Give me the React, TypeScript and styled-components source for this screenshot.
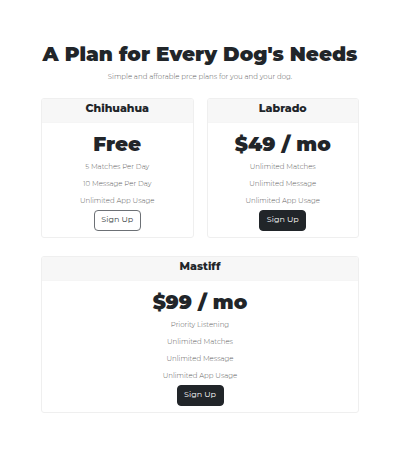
import React from "react";
import styled, { createGlobalStyle } from "styled-components";

const GlobalStyle = createGlobalStyle`
  *, *::before, *::after { box-sizing: border-box; }
  body {
    margin: 0;
    background: #fff;
    color: #212529;
    font-family: Montserrat, Inter, sans-serif;
  }
`;

const Pricing = styled.section`
  padding: 40px 41px;
  text-align: center;
`;

const Title = styled.h1`
  margin: 0 -20px;
  font-size: 20px;
  line-height: 28px;
  font-weight: 900;
`;

const Subtitle = styled.p`
  margin: 4px 0 16px;
  font-size: 7px;
  line-height: 10px;
  font-weight: 300;
  color: #606060;
`;

const Plans = styled.div`
  display: grid;
  grid-template-columns: 1fr 1fr;
  gap: 18px 13px;
`;

const Card = styled.article<{ $wide?: boolean }>`
  grid-column: ${(p) => (p.$wide ? "1 / -1" : "auto")};
  border: 1px solid #efefef;
  border-radius: 3px;
  overflow: hidden;
`;

const PlanName = styled.h2`
  margin: 0;
  padding: 2px 0 6px;
  background: #f7f7f7;
  border-bottom: 1px solid #f5f5f5;
  font-size: 11px;
  line-height: 15px;
  font-weight: 800;
`;

const CardBody = styled.div`
  padding: 8px 6px 6px;
`;

const Price = styled.h3`
  margin: 0;
  font-size: 20px;
  line-height: 27px;
  font-weight: 900;
`;

const Features = styled.ul`
  list-style: none;
  margin: 0 0 1px;
  padding: 0;
  font-size: 7px;
  line-height: 17px;
  font-weight: 300;
  color: #606060;
`;

const SignUp = styled.button<{ $solid?: boolean }>`
  display: block;
  width: 47px;
  height: 21px;
  margin: 0 auto;
  padding: 0 0 2px;
  border: 1px solid ${(p) => (p.$solid ? "#212529" : "#6c7075")};
  border-radius: 4px;
  background: ${(p) => (p.$solid ? "#212529" : "#fff")};
  color: ${(p) => (p.$solid ? "#fff" : "#343a40")};
  font-family: inherit;
  font-size: 8px;
  line-height: 17px;
  font-weight: 400;
  cursor: pointer;
`;

interface Plan {
  name: string;
  price: string;
  features: string[];
  solid?: boolean;
  wide?: boolean;
}

const plans: Plan[] = [
  {
    name: "Chihuahua",
    price: "Free",
    features: ["5 Matches Per Day", "10 Message Per Day", "Unlimited App Usage"],
  },
  {
    name: "Labrado",
    price: "$49 / mo",
    features: ["Unlimited Matches", "Unlimited Message", "Unlimited App Usage"],
    solid: true,
  },
  {
    name: "Mastiff",
    price: "$99 / mo",
    features: [
      "Priority Listening",
      "Unlimited Matches",
      "Unlimited Message",
      "Unlimited App Usage",
    ],
    solid: true,
    wide: true,
  },
];

export default function App() {
  return (
    <>
      <GlobalStyle />
      <Pricing>
        <Title>A Plan for Every Dog's Needs</Title>
        <Subtitle>Simple and afforable prce plans for you and your dog.</Subtitle>
        <Plans>
          {plans.map((plan) => (
            <Card key={plan.name} $wide={plan.wide}>
              <PlanName>{plan.name}</PlanName>
              <CardBody>
                <Price>{plan.price}</Price>
                <Features>
                  {plan.features.map((feature) => (
                    <li key={feature}>{feature}</li>
                  ))}
                </Features>
                <SignUp type="button" $solid={plan.solid}>
                  Sign Up
                </SignUp>
              </CardBody>
            </Card>
          ))}
        </Plans>
      </Pricing>
    </>
  );
}
